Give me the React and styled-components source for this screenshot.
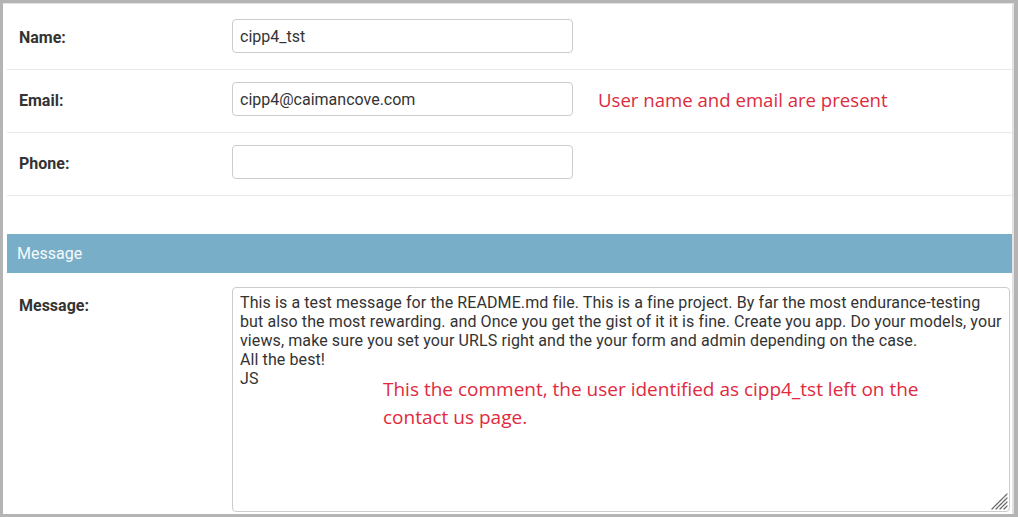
import React from "react";
import styled, { createGlobalStyle } from "styled-components";

const GlobalStyle = createGlobalStyle`
  html, body {
    margin: 0;
    padding: 0;
    background: #ffffff;
  }
  * {
    box-sizing: border-box;
  }
`;

const messageText =
  "This is a test message for the README.md file. This is a fine project. By far the most endurance-testing\n" +
  "but also the most rewarding. and Once you get the gist of it it is fine. Create you app. Do your models, your\n" +
  "views, make sure you set your URLS right and the your form and admin depending on the case.\n" +
  "All the best!\n" +
  "JS";

const ResizeGrip = () => (
  <StGrip width="18" height="18" viewBox="0 0 18 18">
    <g stroke="#6a6a6a" strokeWidth="1.3" strokeLinecap="round" strokeDasharray="2.2 0.8">
      <line x1="2" y1="17" x2="17" y2="2" />
      <line x1="6" y1="17" x2="17" y2="6" />
      <line x1="10" y1="17" x2="17" y2="10" />
      <line x1="14" y1="17" x2="17" y2="14" />
    </g>
  </StGrip>
);

const App = () => {
  return (
    <>
      <GlobalStyle />
      <StFrame>
        <StSheet>
          <StRow>
            <StLabel>Name:</StLabel>
            <StInput type="text" defaultValue="cipp4_tst" readOnly />
          </StRow>
          <StRow>
            <StLabel>Email:</StLabel>
            <StInput type="text" defaultValue="cipp4@caimancove.com" readOnly />
            <StNote>User name and email are present</StNote>
          </StRow>
          <StRow>
            <StLabel>Phone:</StLabel>
            <StInput type="text" defaultValue="" readOnly />
          </StRow>

          <StFieldsetHead>Message</StFieldsetHead>

          <StRow $last>
            <StLabel>Message:</StLabel>
            <StAreaWrap>
              <StTextarea wrap="off" defaultValue={messageText} readOnly />
              <ResizeGrip />
              <StComment>
                This the comment, the user identified as cipp4_tst left on the
                <br />
                contact us page.
              </StComment>
            </StAreaWrap>
          </StRow>
        </StSheet>
      </StFrame>
    </>
  );
};

export default App;

const StFrame = styled.div`
  width: 1018px;
  height: 517px;
  border-style: solid;
  border-color: #b4b4b4;
  border-width: 3px 4px 3px 3px;
  background: #ffffff;
  overflow: hidden;
`;

const StSheet = styled.div`
  height: 100%;
  border-top: 1px solid #e4e4e4;
  border-right: 2px solid #e2e2e2;
  padding: 3px 0 0 4px;
  font-family: Roboto, "Liberation Sans", sans-serif;
`;

const StRow = styled.div`
  display: flex;
  align-items: flex-start;
  padding: ${(props) => (props.$last ? "14px" : "12px")} 0 16px 12px;
  border-bottom: ${(props) => (props.$last ? "none" : "1px solid #e8e8e8")};
`;

const StLabel = styled.div`
  width: 213px;
  flex: none;
  padding-top: 9px;
  line-height: 20px;
  font-size: 16px;
  font-weight: 700;
  color: #333333;
`;

const StInput = styled.input`
  width: 341px;
  height: 34px;
  flex: none;
  padding: 0 7px;
  border: 1px solid #cccccc;
  border-radius: 4px;
  font-family: Roboto, "Liberation Sans", sans-serif;
  font-size: 16px;
  color: #333333;
  background: #ffffff;
  outline: none;
`;

const StNote = styled.div`
  align-self: center;
  margin-left: 25px;
  font-family: "Open Sans", "Noto Sans", sans-serif;
  font-size: 18.6px;
  color: #dc2b40;
  white-space: nowrap;
`;

const StFieldsetHead = styled.div`
  margin-top: 38px;
  height: 39px;
  display: flex;
  align-items: center;
  padding: 0 10px;
  background: #79aec8;
  color: #f6fafc;
  font-size: 16px;
  font-weight: 400;
`;

const StAreaWrap = styled.div`
  position: relative;
  width: 778px;
  height: 225px;
  flex: none;
`;

const StTextarea = styled.textarea`
  display: block;
  width: 100%;
  height: 100%;
  padding: 5px 7px;
  border: 1px solid #cccccc;
  border-radius: 4px;
  font-family: Roboto, "Liberation Sans", sans-serif;
  font-size: 16px;
  letter-spacing: 0.1px;
  line-height: 19px;
  color: #333333;
  background: #ffffff;
  overflow: hidden;
  outline: none;
  resize: none;
`;

const StGrip = styled.svg`
  position: absolute;
  right: 2px;
  bottom: 2px;
  pointer-events: none;
`;

const StComment = styled.div`
  position: absolute;
  left: 151px;
  top: 88px;
  font-family: "Open Sans", "Noto Sans", sans-serif;
  font-size: 19px;
  line-height: 28px;
  color: #e02a3e;
  white-space: nowrap;
  pointer-events: none;
`;
